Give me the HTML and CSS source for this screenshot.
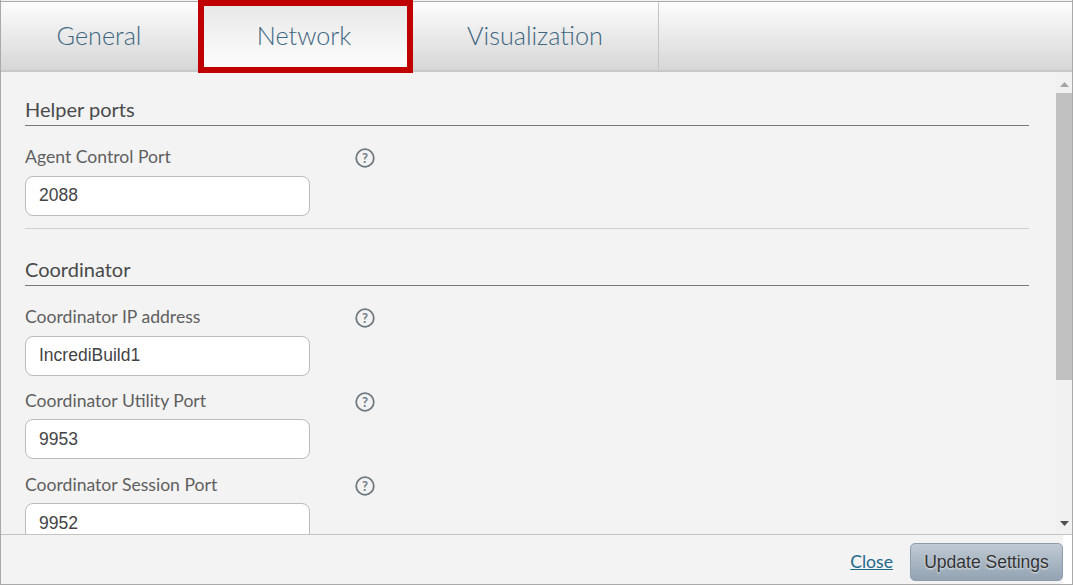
FILE: index.html
```html
<!DOCTYPE html>
<html lang="en">
<head>
<meta charset="utf-8">
<title>Settings</title>
<link rel="stylesheet" href="styles.css">
</head>
<body>
<div class="window">
  <nav class="tabs">
    <a class="tab tab-general">General</a>
    <a class="tab tab-network active">Network</a>
    <a class="tab tab-viz">Visualization</a>
  </nav>
  <div class="main">
    <div class="scroll">
      <section class="group">
        <h2 class="heading">Helper ports</h2>
        <div class="field">
          <div class="label-row"><label class="label">Agent Control Port</label>
            <svg class="help" viewBox="0 0 20 20"><circle cx="10" cy="10" r="8.8"/><text x="10" y="14.5">?</text></svg></div>
          <input class="input" value="2088">
        </div>
      </section>
      <hr class="divider">
      <section class="group">
        <h2 class="heading">Coordinator</h2>
        <div class="field">
          <div class="label-row"><label class="label">Coordinator IP address</label>
            <svg class="help" viewBox="0 0 20 20"><circle cx="10" cy="10" r="8.8"/><text x="10" y="14.5">?</text></svg></div>
          <input class="input" value="IncrediBuild1">
        </div>
        <div class="field">
          <div class="label-row"><label class="label">Coordinator Utility Port</label>
            <svg class="help" viewBox="0 0 20 20"><circle cx="10" cy="10" r="8.8"/><text x="10" y="14.5">?</text></svg></div>
          <input class="input" value="9953">
        </div>
        <div class="field">
          <div class="label-row"><label class="label">Coordinator Session Port</label>
            <svg class="help" viewBox="0 0 20 20"><circle cx="10" cy="10" r="8.8"/><text x="10" y="14.5">?</text></svg></div>
          <input class="input" value="9952">
        </div>
      </section>
    </div>
    <div class="scrollbar">
      <svg class="arrow arrow-up" viewBox="0 0 9 5"><path d="M4.5 0L9 5H0z"/></svg>
      <div class="thumb"></div>
      <svg class="arrow arrow-down" viewBox="0 0 9 5"><path d="M0 0H9L4.5 5z"/></svg>
    </div>
  </div>
  <footer class="footer">
    <a class="close" href="#">Close</a>
    <button class="update">Update Settings</button>
    <span class="footer-end"></span>
  </footer>
</div>
</body>
</html>
```
FILE: styles.css
```css
* { box-sizing: border-box; }
html, body { margin: 0; height: 100%; overflow: hidden; }
body { background: #fff; }
.window {
  width: 1073px; height: 585px;
  display: flex; flex-direction: column;
  padding-top: 1px;
  border: 1px solid #a9a9a9; border-top: 0;
  background: #f3f3f3;
  font-family: Lato, sans-serif;
  overflow: hidden;
}
.tabs {
  flex: none; height: 71px;
  display: flex;
  border-top: 1px solid #a9a9a9;
  border-bottom: 2px solid #c8c8c8;
  background: linear-gradient(#fdfdfd, #d6d6d6);
  position: relative;
}
.tab {
  display: flex; align-items: center; justify-content: center;
  font-size: 25.2px; font-weight: 300; color: #3d6680;
  padding-bottom: 3px;
}
.tab-general { width: 197px; padding-right: 1px; }
.tab-network {
  width: 215px;
  margin: -2px 0 -3px;
  padding: 0 3px 4px 0;
  border: 6px solid #c00000;
  background: linear-gradient(#e8e8e8, #fdfdfd);
  position: relative;
}
.tab-viz { width: 246px; padding-right: 1px; border-right: 1px solid #c4c4c4; }
.main { flex: 1; min-height: 0; display: flex; }
.scroll { flex: 1; min-width: 0; overflow: hidden; padding: 26px 27px 0 24px; }
.heading {
  margin: 0; height: 28px;
  font-size: 20px; font-weight: 400; line-height: 22px; color: #4a4a4a;
  border-bottom: 1px solid #777;
}
.field { width: 360px; }
.group > .heading + .field { margin-top: 19px; }
.label-row { display: flex; align-items: center; height: 24px; }
.label { width: 330px; font-size: 17.6px; line-height: 24px; color: #5f5f5f; }
.help { width: 20px; height: 20px; flex: none; position: relative; top: 1px; }
.help circle { fill: none; stroke: #6f7a82; stroke-width: 1.8; }
.help text { font: 700 13px Lato, sans-serif; fill: #6f7a82; text-anchor: middle; }
.input {
  display: block; margin-top: 7px; margin-bottom: 13px;
  width: 285px; height: 40px; padding: 0 13px 2px;
  border: 1px solid #bcbcbc; border-radius: 8px;
  background: #fff; outline: 0;
  font: 17.5px "Liberation Sans", Arial, sans-serif; color: #444;
}
.field + .field .input { margin-top: 6px; margin-bottom: 14px; padding-bottom: 0; }
.divider { margin: -1px 0 29px; border: 0; border-top: 1px solid #cfcfcf; }
.scrollbar {
  flex: none; width: 16px; display: flex; flex-direction: column; align-items: center;
  background: #f1f1f1;
  padding-top: 10px;
}
.arrow { flex: none; width: 9px; height: 5px; fill: #a3a3a3; }
.thumb { flex: none; width: 16px; height: 287px; margin-top: 6px; background: #c1c1c1; }
.arrow-down { margin-top: auto; margin-bottom: 8px; fill: #505050; }
.footer {
  flex: none; height: 50px;
  display: flex; justify-content: flex-end;
  border-top: 1px solid #c4c4c4;
  background: #f3f3f3;
}
.close { align-self: center; margin-right: 17px; padding-top: 3px; font-size: 17.6px; color: #1f6a8c; text-decoration: underline; }
.update {
  align-self: flex-start; margin-top: 8px;
  width: 153px; height: 38px; padding: 0;
  border: 1px solid #8e9dac; border-radius: 5px;
  background: linear-gradient(#c0cad4, #93a3b2);
  font: 17.5px "Liberation Sans", Arial, sans-serif; color: #333;
  text-shadow: 0 1px 2px #e8edf2;
}
.footer-end { flex: none; width: 9px; background: #fff; }
```
